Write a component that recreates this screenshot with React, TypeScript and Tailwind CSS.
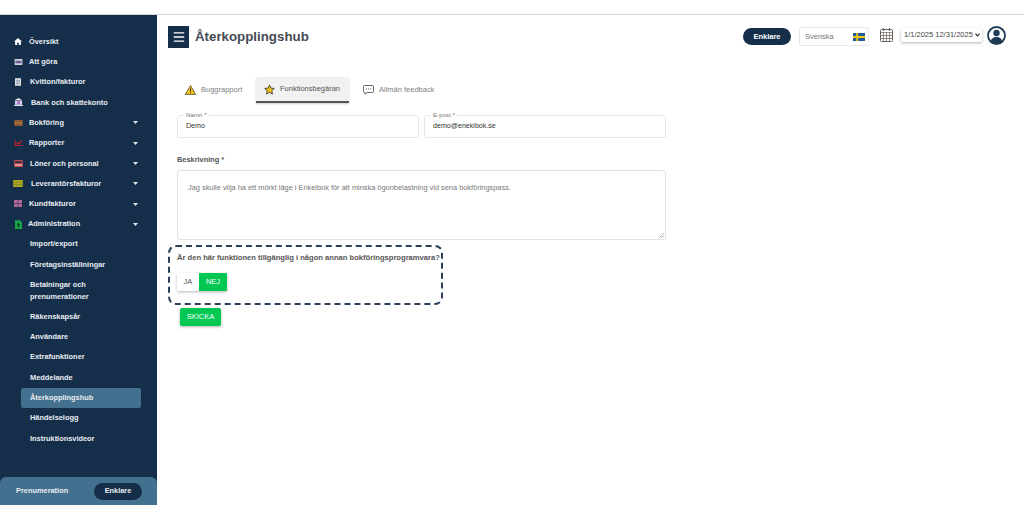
import React from 'react';
import { Menu } from 'lucide-react';

const Caret = () => (
  <svg width="5" height="3" viewBox="0 0 5 3" className="absolute right-[19px] top-[9px]">
    <path d="M0 0h5L2.500 3z" fill="#e5e7eb" />
  </svg>
);

const Glyph: React.FC<{ kind: string }> = ({ kind }) => {
  switch (kind) {
    case 'home':
      return (
        <svg width="8" height="7" viewBox="0 0 9 8">
          <path d="M4.500 0 9 4H7.800v4H5.400V5.400H3.600V8H1.200V4H0z" fill="#fff" />
        </svg>
      );
    case 'todo':
      return (
        <svg width="9" height="6" viewBox="0 0 9 7">
          <rect width="9" height="7" fill="#d1d5db" />
          <rect x="1" y="2" width="7" height="3" fill="#6b5f96" />
        </svg>
      );
    case 'receipt':
      return (
        <svg width="6" height="8" viewBox="0 0 7 9">
          <rect width="7" height="9" rx="0.5" fill="#e5e7eb" />
          <path d="M1 2.500h5M1 4.500h5M1 6.500h5" stroke="#64748b" strokeWidth="0.8" />
        </svg>
      );
    case 'bank':
      return (
        <svg width="9" height="8" viewBox="0 0 10 9">
          <path d="M5 0 9.500 2.500H.5z" fill="#e5e7eb" />
          <rect x="1" y="3" width="8" height="4.600" fill="#d8d4ea" />
          <rect x="3.600" y="3.800" width="2.800" height="2.800" fill="#a855c7" />
          <rect y="7.800" width="10" height="1.200" fill="#e5e7eb" />
        </svg>
      );
    case 'book':
      return (
        <svg width="9" height="6" viewBox="0 0 10 7">
          <rect width="10" height="7" fill="#8a5a32" />
          <path d="M1 3.500h8" stroke="#d6a243" strokeWidth="1.400" strokeDasharray="1.400 1" />
        </svg>
      );
    case 'report':
      return (
        <svg width="9" height="6" viewBox="0 0 9 7">
          <path d="M0 0v7h9V5.800H1.200V0z" fill="#c81e2e" />
          <path d="M2 5 4 2.800 5.500 4 8.600.8" fill="none" stroke="#c81e2e" strokeWidth="1.300" />
        </svg>
      );
    case 'salary':
      return (
        <svg width="9" height="7" viewBox="0 0 10 8">
          <rect width="10" height="8" rx="1" fill="#c4484f" />
          <rect x="1" y="1.500" width="8" height="2" fill="#1b3049" />
          <rect x="1" y="5" width="8" height="1.600" fill="#e8b8a8" />
        </svg>
      );
    case 'supplier':
      return (
        <svg width="10" height="7" viewBox="0 0 11 8">
          <rect width="11" height="8" fill="#b5a821" />
          <path d="M1 2.500h9M1 5.500h9" stroke="#4a7a2a" strokeWidth="1.200" strokeDasharray="1.500 1" />
        </svg>
      );
    case 'customer':
      return (
        <svg width="8" height="7" viewBox="0 0 9 8">
          <rect width="9" height="8" fill="#b56a9a" />
          <path d="M4.500 0v8M0 4h9" stroke="#55406e" strokeWidth="1" />
        </svg>
      );
    default:
      return (
        <svg width="7" height="9" viewBox="0 0 8 10">
          <path d="M0 0h5.500L8 2.500V10H0z" fill="#16a34a" />
          <path d="M4 3 6 5.400H4.800V8H3.200V5.400H2z" fill="#0b3d20" />
        </svg>
      );
  }
};

const topItems = [
  { label: 'Översikt', icon: 'home', x: 'pl-[13px] gap-[6px]' },
  { label: 'Att göra', icon: 'todo', x: 'pl-[13px] gap-[6px]' },
  { label: 'Kvitton/fakturor', icon: 'receipt', x: 'pl-[13px] gap-[7px]' },
  { label: 'Bank och skattekonto', icon: 'bank', x: 'pl-[13px] gap-[8px]' },
  { label: 'Bokföring', icon: 'book', x: 'pl-[13px] gap-[6px]', caret: true },
  { label: 'Rapporter', icon: 'report', x: 'pl-[13px] gap-[6px]', caret: true },
  { label: 'Löner och personal', icon: 'salary', x: 'pl-[13px] gap-[7px]', caret: true },
  { label: 'Leverantörsfakturor', icon: 'supplier', x: 'pl-[13px] gap-[8px]', caret: true },
  { label: 'Kundfakturor', icon: 'customer', x: 'pl-[13px] gap-[6px]', caret: true },
  { label: 'Administration', icon: 'admin', x: 'pl-[13px] gap-[5px]', caret: true },
];

const subItems = [
  'Import/export',
  'Företagsinställningar',
  'Betalningar och prenumerationer',
  'Räkenskapsår',
  'Användare',
  'Extrafunktioner',
  'Meddelande',
  'Återkopplingshub',
  'Händelselogg',
  'Instruktionsvideor',
];

const Sidebar = () => (
  <aside className="w-[157px] shrink-0 bg-[#152f4a] flex flex-col text-[#e8ecf2] text-[7.400px] font-bold">
    <nav className="pt-[16.200px]">
      {topItems.map((item) => (
        <div key={item.label} className={`relative h-[20.300px] flex items-center ${item.x}`}>
          <span className="w-[10px] flex justify-center">
            <Glyph kind={item.icon} />
          </span>
          <span>{item.label}</span>
          {item.caret && <Caret />}
        </div>
      ))}
      {subItems.map((label) => (
        <div
          key={label}
          className={`mx-[21px] w-[120px] pl-[9px] flex items-center rounded-[2px] leading-[12px] ${
            label === 'Återkopplingshub' ? 'bg-[#44708f]' : ''
          } ${label.length > 25 ? 'h-[32px] pr-[20px]' : 'h-[20.300px]'}`}
        >
          {label}
        </div>
      ))}
    </nav>
    <div className="mt-auto h-[28px] bg-[#44708f] rounded-t-[6px] flex items-center justify-between pl-[16px] pr-[15px]">
      <span>Prenumeration</span>
      <span className="w-[48px] h-[17px] rounded-full bg-[#152f4a] flex items-center justify-center">Enklare</span>
    </div>
  </aside>
);

const Header = () => (
  <header className="flex items-center h-[43px] pl-[11px] pr-[18px]">
    <div className="w-[21px] h-[22px] bg-[#152f4a] flex items-center justify-center">
      <Menu size={14} color="#ffffff" strokeWidth={2.400} />
    </div>
    <h1 className="ml-[6px] text-[13.300px] font-bold text-[#444b54]">Återkopplingshub</h1>
    <div className="ml-auto flex items-center">
      <span className="w-[48px] h-[17px] rounded-full bg-[#152f4a] text-white text-[7.500px] font-bold flex items-center justify-center">
        Enklare
      </span>
      <div className="ml-[8px] w-[70px] h-[19px] border border-[#e5e7eb] rounded-[2px] flex items-center justify-between pl-[5px] pr-[3px] text-[7.500px] text-[#777]">
        <span>Svenska</span>
        <svg width="12" height="8" viewBox="0 0 12 8">
          <rect width="12" height="8" fill="#1d5c99" />
          <path d="M0 4h12M4.200 0v8" stroke="#f4c613" strokeWidth="1.800" />
        </svg>
      </div>
      <svg width="13" height="14" viewBox="0 0 13 14" className="ml-[11px] mb-[3px]">
        <rect x="0.500" y="1.500" width="12" height="12" rx="1" fill="#fff" stroke="#6b6259" />
        <path d="M.5 4.500h12M.5 7.500h12M.5 10.500h12M3.500 4.500v9M6.500 4.500v9M9.500 4.500v9" stroke="#6b6259" strokeWidth="0.700" />
        <path d="M3.500 0v3M9.500 0v3" stroke="#6b6259" strokeWidth="1.200" />
      </svg>
      <div className="ml-[8px] w-[81px] h-[14px] mb-[3px] bg-white rounded-[2px] shadow-[0_1px_3px_rgba(0,0,0,0.3)] flex items-center justify-between pl-[3px] pr-[2px] text-[7.500px] text-[#444] whitespace-nowrap">
        <span>1/1/2025 12/31/2025</span>
        <svg width="5" height="4" viewBox="0 0 5 4">
          <path d="M.5.7 2.500 3 4.500.7" fill="none" stroke="#222" strokeWidth="1.100" />
        </svg>
      </div>
      <svg width="19" height="19" viewBox="0 0 19 19" className="ml-[5px] mb-[3px]">
        <circle cx="9.500" cy="9.500" r="8.500" fill="#fff" stroke="#1f3b57" strokeWidth="1.800" />
        <circle cx="9.500" cy="7" r="3.200" fill="#1f3b57" />
        <path d="M3.800 15.500c.8-3.400 3-4.500 5.700-4.500s4.900 1.100 5.700 4.500a8 8 0 0 1-11.400 0z" fill="#1f3b57" />
      </svg>
    </div>
  </header>
);

const Tabs = () => (
  <div className="flex items-center h-[26px] mt-[19px] ml-[16px] text-[7.500px] text-[#7b7f85]">
    <div className="w-[82px] h-full flex items-center pl-[12px] gap-[5px]">
      <svg width="11" height="10" viewBox="0 0 11 10">
        <path d="M5.500.5 10.700 9.600H.3z" fill="#f2c21a" stroke="#4b4630" strokeWidth="0.800" />
        <path d="M5.500 3.500v3M5.500 7.300v1" stroke="#3a3524" strokeWidth="1" />
      </svg>
      <span>Buggrapport</span>
    </div>
    <div className="ml-[1px] w-[93px] h-full flex items-center pl-[8px] gap-[5px] bg-[#f1f1f1] rounded-t-[3px] border-b-2 border-[#555] shadow-[0_1px_2px_rgba(0,0,0,0.2)] text-[#555]">
      <svg width="11" height="11" viewBox="0 0 24 24">
        <path d="M12 2l3 7 7.500.7-5.600 5 1.700 7.300L12 18.200 5.400 22l1.700-7.300-5.600-5L9 9z" fill="#f2c21a" stroke="#4b4630" strokeWidth="2" />
      </svg>
      <span>Funktionsbegäran</span>
    </div>
    <div className="h-full flex items-center pl-[14px] gap-[5px]">
      <svg width="11" height="10" viewBox="0 0 11 10">
        <path d="M1.500.5h8a1 1 0 0 1 1 1v5a1 1 0 0 1-1 1H4L2 9.300V7.500h-.5a1 1 0 0 1-1-1v-5a1 1 0 0 1 1-1z" fill="#fff" stroke="#555" strokeWidth="0.900" />
        <path d="M3 4h1M5 4h1M7 4h1" stroke="#555" strokeWidth="1" />
      </svg>
      <span>Allmän feedback</span>
    </div>
  </div>
);

const Field: React.FC<{ label: string; value: string; width: string }> = ({ label, value, width }) => (
  <div className={`relative h-[23px] ${width} border border-[#e6e7e9] rounded-[3px] flex items-center pl-[8px] text-[7.100px] text-[#333]`}>
    <span className="absolute -top-[5px] left-[6px] px-[2px] bg-white text-[6.200px] leading-[8px] text-[#777]">{label}</span>
    {value}
  </div>
);

const Form = () => (
  <div className="ml-[20px] w-[489px] text-[7.400px]">
    <div className="flex gap-[5px] mt-[12px]">
      <Field label="Namn *" value="Demo" width="w-[242px]" />
      <Field label="E-post *" value="demo@enekibok.se" width="w-[242px]" />
    </div>
    <div className="mt-[17px] font-bold text-[#555] leading-[10px]">Beskrivning *</div>
    <div className="relative mt-[5px] h-[70px] border border-[#e0e1e3] rounded-[3px] pl-[10px] pt-[12px] text-[#777] leading-[10px]">
      Jag skulle vilja ha ett mörkt läge i Enkelbok för att minska ögonbelastning vid sena bokföringspass.
      <svg width="5" height="5" viewBox="0 0 5 5" className="absolute right-[1px] bottom-[1px]">
        <path d="M0 5 5 0M2.500 5 5 2.500" stroke="#888" strokeWidth="0.700" />
      </svg>
    </div>
  </div>
);

const Question = () => (
  <div className="ml-[11px] mt-[5px] w-[275px] h-[60px] border-2 border-dashed border-[#2a3f5a] rounded-[8px] pl-[7px] pt-[6px]">
    <div className="text-[7.600px] font-bold text-[#555] leading-[10px] whitespace-nowrap">
      Är den här funktionen tillgänglig i någon annan bokföringsprogramvara?
    </div>
    <div className="flex mt-[10px] w-[50px] h-[18px] rounded-[2px] shadow-[0_1px_3px_rgba(0,0,0,0.3)] text-[7.500px]">
      <span className="w-[22px] flex items-center justify-center text-[#555] bg-white">JA</span>
      <span className="w-[28px] flex items-center justify-center text-white bg-[#00c853]">NEJ</span>
    </div>
  </div>
);

export default function App() {
  return (
    <div className="h-[520px] w-[1024px] bg-white pt-[14px] overflow-hidden font-['Liberation_Sans',Arial,sans-serif]">
      <div className="h-[491px] flex border-t border-[#d4d4d4]">
        <Sidebar />
        <main className="flex-1 min-w-0">
          <Header />
          <Tabs />
          <Form />
          <Question />
          <button className="block ml-[23px] mt-[3px] w-[41px] h-[18px] bg-[#00c853] rounded-[2px] text-white text-[7.500px] shadow-[0_1px_3px_rgba(0,0,0,0.3)]">
            SKICKA
          </button>
        </main>
      </div>
    </div>
  );
}
